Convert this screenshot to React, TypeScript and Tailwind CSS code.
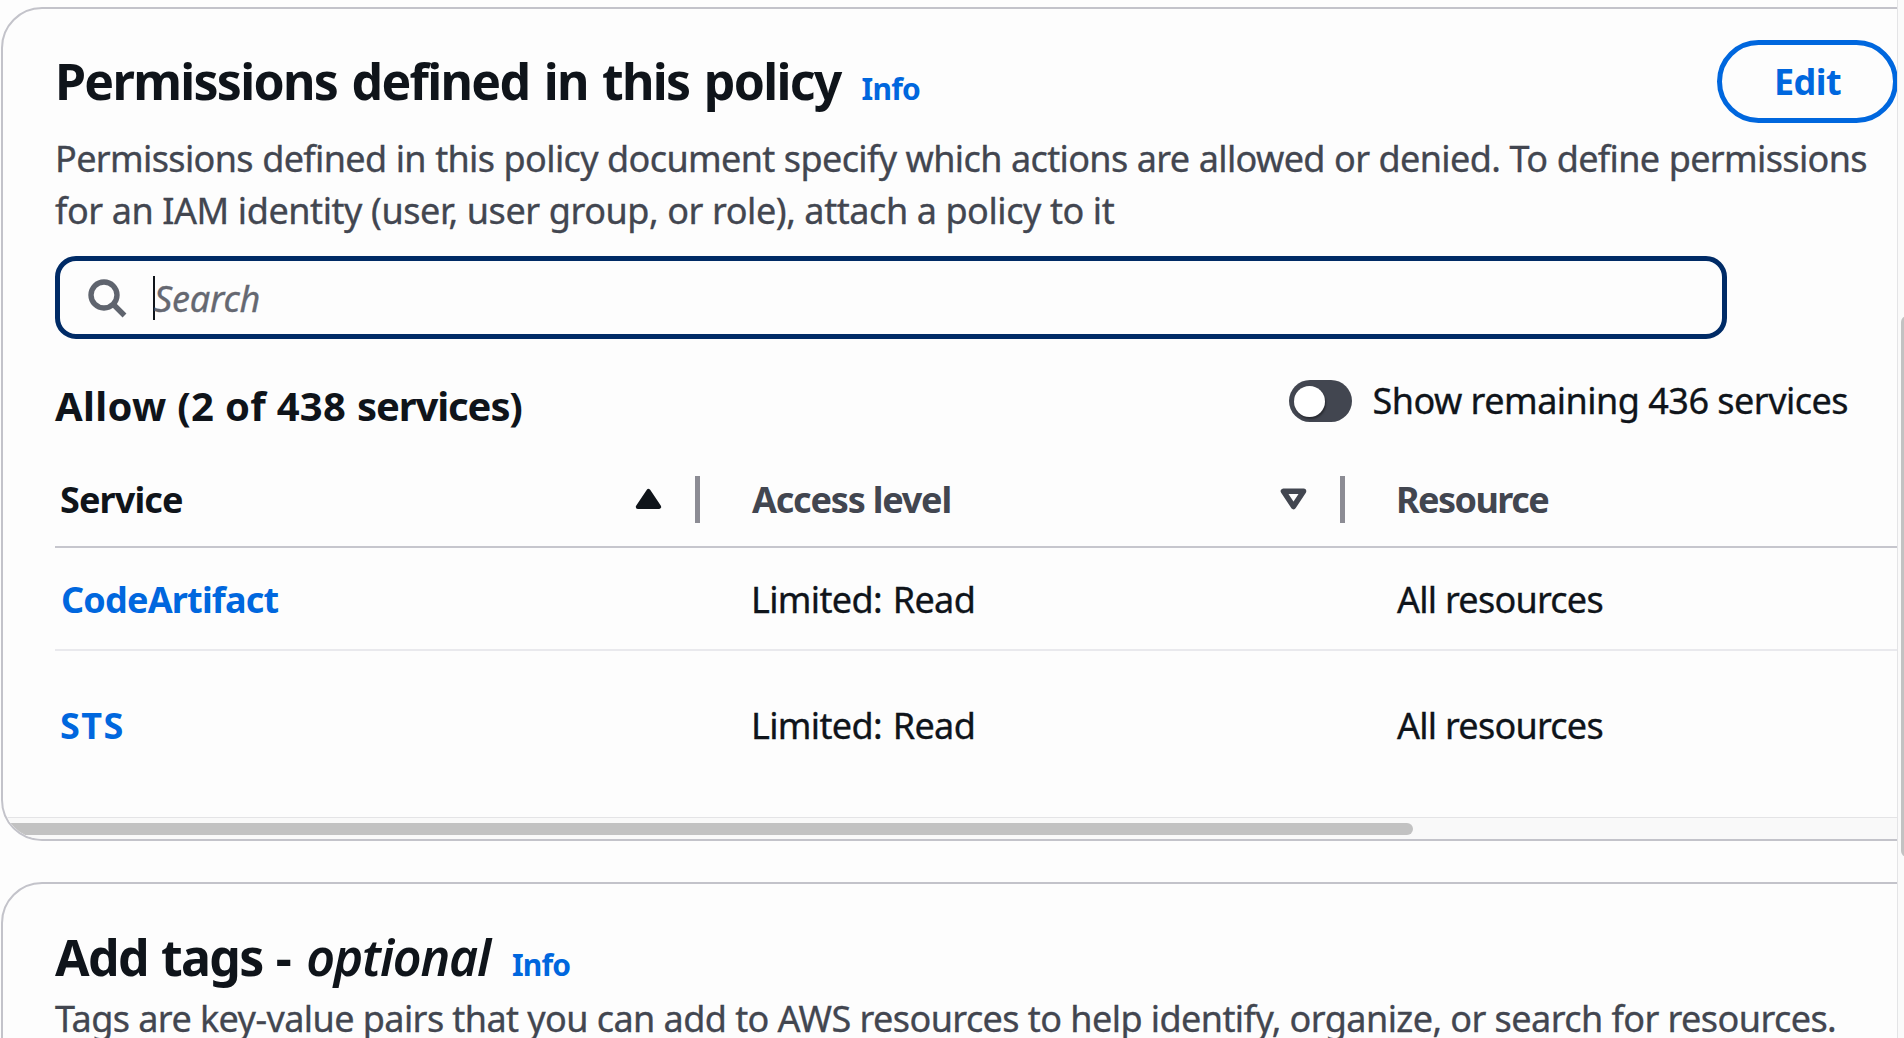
import type { ReactNode } from "react";

function SearchIcon() {
  return (
    <svg className="h-10 w-10 shrink-0" viewBox="0 0 40 40" fill="none" stroke="#5f646e" strokeWidth="5.4">
      <circle cx="17" cy="17" r="13" />
      <path d="M26 26 37.5 37.5" />
    </svg>
  );
}

function SortAscIcon() {
  return (
    <svg className="h-6 w-7 shrink-0" viewBox="0 0 28 24" fill="#0f141a" stroke="#0f141a" strokeWidth="4" strokeLinejoin="round">
      <path d="M13.5 3.8 24.2 19.9H2.8Z" />
    </svg>
  );
}

function SortIcon() {
  return (
    <svg className="h-6 w-7 shrink-0" viewBox="0 0 28 24" fill="none" stroke="#424650" strokeWidth="5.4" strokeLinejoin="round">
      <path d="M3.4 4.2h20.2L13.5 19.6Z" />
    </svg>
  );
}

function Divider() {
  return <div className="h-[47px] w-[5px] shrink-0 bg-[#8c8c94]" />;
}

function InfoLink({ children }: { children: ReactNode }) {
  return <a className="-mt-px text-[30px] font-bold tracking-[-0.8px] text-[#0067de]">{children}</a>;
}

const rows = [
  { service: "CodeArtifact", level: "Limited: Read", resource: "All resources" },
  { service: "STS", level: "Limited: Read", resource: "All resources" },
];

function ServiceRow({ service, level, resource, last }: { service: string; level: string; resource: string; last: boolean }) {
  return (
    <div
      className={
        last
          ? "grid h-[147px] grid-cols-[645px_645px_1fr] items-center pt-[2px]"
          : "grid h-[103px] grid-cols-[645px_645px_1fr] items-center border-b-2 border-[#e9e9ed] pt-[2px]"
      }
    >
      <a className={last ? "pl-[5px] font-bold tracking-[1.5px] text-[#0067de]" : "pl-[6px] font-bold tracking-[-0.8px] text-[#0067de]"}>{service}</a>
      <span className="pl-[51px] tracking-[-0.65px] [-webkit-text-stroke:0.35px] [word-spacing:2px]">{level}</span>
      <span className="pl-[52px] tracking-[-0.75px] [-webkit-text-stroke:0.35px]">{resource}</span>
    </div>
  );
}

export default function App() {
  return (
    <div className="flex h-[1038px] w-[1904px] overflow-hidden bg-[#fdfdfd] font-['Noto_Sans',sans-serif] text-[36px] leading-[52px] whitespace-nowrap text-[#0f141a]">
      <main className="flex w-[1897px] shrink-0 flex-col gap-[41px] overflow-hidden pt-[7px] pl-px">
        <section className="flex h-[834px] w-[2400px] shrink-0 flex-col overflow-hidden rounded-[41px] border-2 border-[#c3c3ca]">
          <div className="flex flex-col pl-[52px]">
            <header className="flex h-[124px] w-[1843px] justify-between pt-[31px]">
              <h2 className="flex items-baseline gap-[21px] pt-[11px] text-[50px] leading-[60px] font-bold tracking-[-1.7px]">
                <span className="[word-spacing:3px]">Permissions defined in this policy</span>
                <InfoLink>Info</InfoLink>
              </h2>
              <button className="flex h-[83px] w-[181px] items-center justify-center rounded-full border-[5px] border-[#0067de] pt-px text-[36px] font-bold tracking-[-0.6px] text-[#0067de]">
                Edit
              </button>
            </header>
            <p className="text-[#424650] [-webkit-text-stroke:0.35px]">
              <span className="block tracking-[-0.64px] [word-spacing:0.5px]">
                Permissions defined in this policy document specify which actions are allowed or denied. To define permissions
              </span>
              <span className="block tracking-[-0.42px]">for an IAM identity (user, user group, or role), attach a policy to it</span>
            </p>
            <div className="mt-[19px] flex h-[83px] w-[1672px] items-center rounded-[21px] border-[5px] border-[#002b66] pl-[27px]">
              <SearchIcon />
              <div className="ml-[26px] flex items-center pt-px">
                <span className="h-[44px] w-[2px] bg-[#0f141a]" />
                <span className="-ml-px pt-px tracking-[-0.2px] text-[#656871] italic [-webkit-text-stroke:0.35px]">Search</span>
              </div>
            </div>
            <div className="mt-[41px] flex h-[52px] w-[1793px] items-start justify-between">
              <h3 className="text-[40px] font-bold tracking-[0.3px]">
                Allow (2 of 438 <span className="tracking-[-1.1px]">services)</span>
              </h3>
              <label className="-mt-px flex h-[44px] items-center gap-[20px]">
                <span className="flex h-[42px] w-[63px] items-center rounded-full bg-[#424650] pl-[5px]">
                  <span className="h-[31px] w-[31px] rounded-full bg-white shadow-[1px_2px_2px_rgba(0,0,0,0.4)]" />
                </span>
                <span className="tracking-[-0.52px] [-webkit-text-stroke:0.35px]">Show remaining 436 services</span>
              </label>
            </div>
            <div className="mt-[20px] grid h-[96px] grid-cols-[645px_645px_1fr] items-center border-b-2 border-[#c6c6cd] font-bold">
              <div className="flex items-center pl-[5px]">
                <span className="grow pt-[2px] tracking-[-0.9px]">Service</span>
                <SortAscIcon />
                <div className="ml-[32px]">
                  <Divider />
                </div>
              </div>
              <div className="flex items-center pl-[52px] text-[#424650]">
                <span className="grow pt-[2px] tracking-[-1.2px]">Access level</span>
                <SortIcon />
                <div className="ml-[32px]">
                  <Divider />
                </div>
              </div>
              <span className="pt-[2px] pl-[51px] tracking-[-1.55px] text-[#424650]">Resource</span>
            </div>
            {rows.map((row, i) => (
              <ServiceRow key={row.service} {...row} last={i === rows.length - 1} />
            ))}
          </div>
          <div className="mt-auto flex h-[22px] items-center border-t border-[#e4e4e6] bg-[#f9f9f9]">
            <div className="h-3 w-[1410px] rounded-r-full bg-[#c2c2c2]" />
          </div>
        </section>
        <section className="h-[400px] w-[2400px] shrink-0 rounded-[41px] border-2 border-[#c3c3ca] pt-[43px] pl-[52px]">
          <h2 className="flex h-[60px] items-baseline text-[50px] leading-[60px] font-bold tracking-[-1.6px]">
            <span className="mr-[16px] [word-spacing:1.5px]">Add tags -</span>
            <em className="mr-[22px] font-semibold tracking-[-1.2px]">optional</em>
            <InfoLink>Info</InfoLink>
          </h2>
          <p className="mt-[6px] tracking-[-0.57px] text-[#424650] [-webkit-text-stroke:0.35px]">
            Tags are key-value pairs that you can add to AWS resources to help identify, organize, or search for resources.
          </p>
        </section>
      </main>
      <aside className="flex w-[7px] shrink-0 flex-col overflow-hidden border-l border-[#e4e4e6] bg-[#fafafa] pt-[316px] pl-[3px]">
        <div className="h-[541px] w-3 rounded-full bg-[#c2c2c2]" />
      </aside>
    </div>
  );
}
